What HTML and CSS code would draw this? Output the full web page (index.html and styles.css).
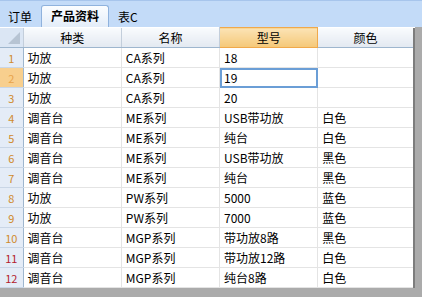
FILE: index.html
```html
<!DOCTYPE html>
<html lang="zh-CN">
<head>
  <meta charset="UTF-8" />
  <title>产品资料</title>
  <link rel="stylesheet" href="styles.css">
</head>
<body>
  <div class="tabs">
    <span class="tab">订单</span>
    <span class="tab active">产品资料</span>
    <span class="tab">表C</span>
  </div>

  <table class="grid">
    <colgroup>
      <col class="c-num"><col class="c-col"><col class="c-col"><col class="c-col"><col class="c-last">
    </colgroup>
    <thead>
      <tr>
        <th class="corner"><span class="tri"></span></th>
        <th>种类</th>
        <th>名称</th>
        <th class="sel">型号</th>
        <th>颜色</th>
      </tr>
    </thead>
    <tbody>
      <tr><td class="num">1</td><td>功放</td><td>CA系列</td><td>18</td><td></td></tr>
      <tr><td class="num cur">2</td><td>功放</td><td>CA系列</td><td class="active-cell">19</td><td></td></tr>
      <tr><td class="num">3</td><td>功放</td><td>CA系列</td><td>20</td><td></td></tr>
      <tr><td class="num">4</td><td>调音台</td><td>ME系列</td><td>USB带功放</td><td>白色</td></tr>
      <tr><td class="num">5</td><td>调音台</td><td>ME系列</td><td>纯台</td><td>白色</td></tr>
      <tr><td class="num">6</td><td>调音台</td><td>ME系列</td><td>USB带功放</td><td>黑色</td></tr>
      <tr><td class="num">7</td><td>调音台</td><td>ME系列</td><td>纯台</td><td>黑色</td></tr>
      <tr><td class="num">8</td><td>功放</td><td>PW系列</td><td>5000</td><td>蓝色</td></tr>
      <tr><td class="num">9</td><td>功放</td><td>PW系列</td><td>7000</td><td>蓝色</td></tr>
      <tr><td class="num">10</td><td>调音台</td><td>MGP系列</td><td>带功放8路</td><td>黑色</td></tr>
      <tr><td class="num red">11</td><td>调音台</td><td>MGP系列</td><td>带功放12路</td><td>白色</td></tr>
      <tr><td class="num red">12</td><td>调音台</td><td>MGP系列</td><td>纯台8路</td><td>白色</td></tr>
    </tbody>
  </table>
</body>
</html>
```

FILE: styles.css
```css
body {
  margin: 0;
  background: #ababab;
  font-family: "Noto Sans CJK SC", "DejaVu Sans", sans-serif;
  font-size: 12px;
  color: #000;
}

.tabs {
  height: 27px;
  background: #c3dbf8;
  border-top: 1px solid #a7c5ec;
  display: flex;
  align-items: flex-end;
  padding-left: 2px;
  box-sizing: border-box;
}

.tab {
  height: 20px;
  line-height: 19px;
  padding: 0 6px;
  margin-right: 3px;
  box-sizing: border-box;
}

.tab.active {
  font-weight: bold;
  background: linear-gradient(#fbfdff, #e3edf9);
  border: 1px solid #8fb2dd;
  border-bottom: none;
  border-radius: 3px 3px 0 0;
  height: 22px;
  padding: 0 9px;
}

.grid {
  border-collapse: collapse;
  table-layout: fixed;
  width: 415px;
  background: #fff;
  border-right: 2px solid #7d7d7d;
  border-bottom: 1px solid #8c8c8c;
}

.c-num { width: 23px; }
.c-col { width: 98px; }
.c-last { width: 96px; }

th {
  height: 20px;
  padding: 0;
  font-weight: normal;
  text-align: center;
  background: linear-gradient(#f9fbfd, #e3e9f1);
  border-right: 1px solid #c3cedb;
  border-bottom: 1px solid #9eb6ce;
  box-sizing: border-box;
}

th.sel {
  background: linear-gradient(#fbe3b4, #f5c878);
  border: 1px solid #f0a94b;
}

th.corner {
  background: #dbe6f4;
  position: relative;
}

.tri {
  position: absolute;
  right: 3px;
  bottom: 3px;
  width: 0;
  height: 0;
  border-left: 12px solid transparent;
  border-bottom: 12px solid #b7c4d3;
}

td {
  height: 20px;
  padding: 0 0 0 4px;
  border-right: 1px solid #e4e4e4;
  border-bottom: 1px solid #e4e4e4;
  white-space: nowrap;
  overflow: hidden;
  box-sizing: border-box;
}

td.num {
  padding: 0;
  text-align: center;
  font-size: 11px;
  color: #d08a2c;
  background: #e4ecf7;
  border-right: 1px solid #9eb6ce;
  border-bottom: 1px solid #c9d6e6;
}

td.num.cur {
  background: #f8cf8e;
  color: #e8a24a;
}

td.num.red {
  color: #b3202a;
}

td.active-cell {
  outline: 2px solid #6b9ed6;
  outline-offset: -2px;
}
```
